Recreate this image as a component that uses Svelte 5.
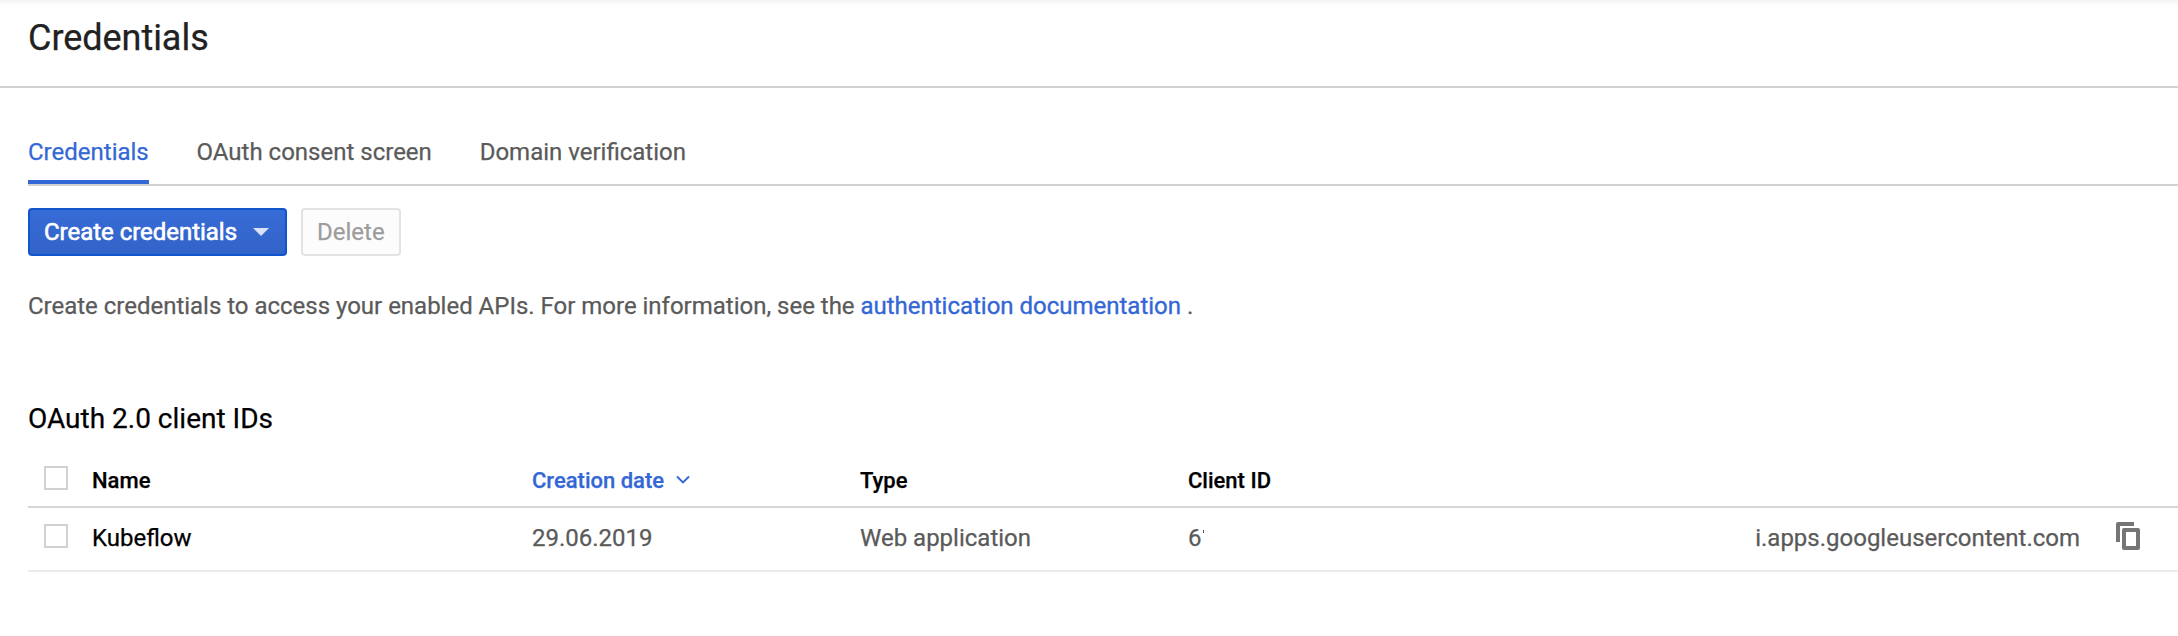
<script>
  const tabs = ['Credentials', 'OAuth consent screen', 'Domain verification'];
  const rows = [
    {
      name: 'Kubeflow',
      date: '29.06.2019',
      type: 'Web application',
      idStart: '6',
      idEnd: 'i.apps.googleusercontent.com'
    }
  ];
  let active = $state(0);
</script>

<header class="page-header"><h1>Credentials</h1></header>

<main>
  <nav class="tabs">
    {#each tabs as tab, i}
      <button class="tab" class:active={active === i} onclick={() => (active = i)}>{tab}</button>
    {/each}
  </nav>

  <div class="actions">
    <button class="btn primary">
      <span>Create credentials</span>
      <svg width="16" height="8" viewBox="0 0 16 8"><path d="M0 0h16L8 8z" fill="#d9e2f6" /></svg>
    </button>
    <button class="btn disabled" disabled>Delete</button>
  </div>

  <p class="intro">
    Create credentials to access your enabled APIs. For more information, see the
    <span class="link">authentication documentation</span> .
  </p>

  <h2>OAuth 2.0 client IDs</h2>

  <section class="table">
    <div class="row head">
      <span class="check"></span>
      <span>Name</span>
      <span class="sorted">
        <span>Creation date</span>
        <svg width="14" height="10" viewBox="0 0 14 10"><path d="M1 1.5l6 6 6-6" fill="none" stroke="#3367d6" stroke-width="1.9" /></svg>
      </span>
      <span>Type</span>
      <span>Client ID</span>
    </div>
    {#each rows as row}
      <div class="row body">
        <span class="check"></span>
        <span class="name">{row.name}</span>
        <span>{row.date}</span>
        <span>{row.type}</span>
        <span class="client">
          <span class="start">{row.idStart}<i class="mark"></i></span>
          <span class="end">{row.idEnd}</span>
          <svg class="copy" width="24" height="28" viewBox="0 0 24 28">
            <path d="M18 0H2a2 2 0 0 0-2 2v18h4V4h14z" fill="#757575" />
            <path fill-rule="evenodd" d="M8 6h14a2 2 0 0 1 2 2v18a2 2 0 0 1-2 2H8a2 2 0 0 1-2-2V8a2 2 0 0 1 2-2zm2 4v14h10V10z" fill="#757575" />
          </svg>
        </span>
      </div>
    {/each}
  </section>
</main>

<style>
  :global(body) {
    background: #fff;
    overflow: hidden;
  }
  :global(#app) {
    font: 24px/32px Roboto, sans-serif;
    color: #5a5a5a;
    -webkit-text-stroke: 0.25px currentColor;
  }
  h1, h2, p { margin: 0; font-weight: 400; }
  button { font: inherit; margin: 0; cursor: pointer; -webkit-text-stroke: 0.25px currentColor; }
  .page-header {
    box-sizing: border-box;
    height: 88px;
    padding: 15px 28px 0;
    border-bottom: 2px solid #d1d1d1;
    background: linear-gradient(#f3f3f3, #fff 6px);
  }
  h1 { font-size: 36px; line-height: 46px; color: #212121; letter-spacing: -0.04px; }
  main { padding-left: 28px; }
  .tabs {
    display: flex;
    gap: 47.8px;
    box-sizing: border-box;
    height: 98px;
    padding-top: 48px;
    border-bottom: 2px solid #d1d1d1;
  }
  .tab {
    padding: 0 0 12px;
    border: 0;
    border-bottom: 4px solid transparent;
    background: none;
    color: #5a5a5a;
    white-space: nowrap;
  }
  .tab.active { color: #3367d6; border-bottom-color: #3367d6; }
  .actions { display: flex; gap: 14px; margin-top: 22px; }
  .btn {
    display: flex;
    align-items: center;
    box-sizing: border-box;
    height: 48px;
    padding: 0 14px;
    border: 2px solid #e3e3e3;
    border-radius: 4px;
    white-space: nowrap;
  }
  .primary {
    width: 259px;
    justify-content: space-between;
    padding-right: 16px;
    border-color: #1155cc;
    background: linear-gradient(#376bd6, #3263c8);
    color: #fff;
    letter-spacing: -0.03px;
    -webkit-text-stroke: 0.6px #fff;
  }
  .disabled { width: 100px; background: #fcfcfc; color: #9c9c9c; cursor: default; }
  .intro { margin-top: 34px; letter-spacing: -0.012px; }
  .link { color: #3367d6; -webkit-text-stroke: 0.35px currentColor; }
  h2 { margin-top: 79px; font-size: 28px; line-height: 36px; color: #000; }
  .table { margin-top: 17px; }
  .row {
    display: grid;
    grid-template-columns: 64px 440px 328px 328px 1fr;
    align-items: start;
    box-sizing: border-box;
    height: 64px;
    padding-top: 14px;
    border-bottom: 2px solid #ebebeb;
  }
  .head {
    height: 54px;
    padding-top: 11px;
    border-bottom-color: #d5d5d5;
    font-size: 22px;
    font-weight: 500;
    color: #000;
  }
  .check {
    box-sizing: border-box;
    width: 24px;
    height: 24px;
    margin: 2px 0 0 16px;
    border: 2px solid #d1d1d1;
    background: #fff;
  }
  .head .check { margin-top: 1px; }
  .sorted { display: flex; align-items: center; gap: 12px; color: #3367d6; -webkit-text-stroke: 0.25px currentColor; }
  .sorted svg { margin-bottom: 2px; }
  .name { color: #000; -webkit-text-stroke: 0.25px currentColor; }
  .client { display: flex; }
  .start { display: flex; }
  .mark { width: 1px; height: 3px; margin: 8px 0 0 1px; background: #555; }
  .end { margin-left: auto; }
  .copy { margin: 0 38px 0 36px; }
</style>
